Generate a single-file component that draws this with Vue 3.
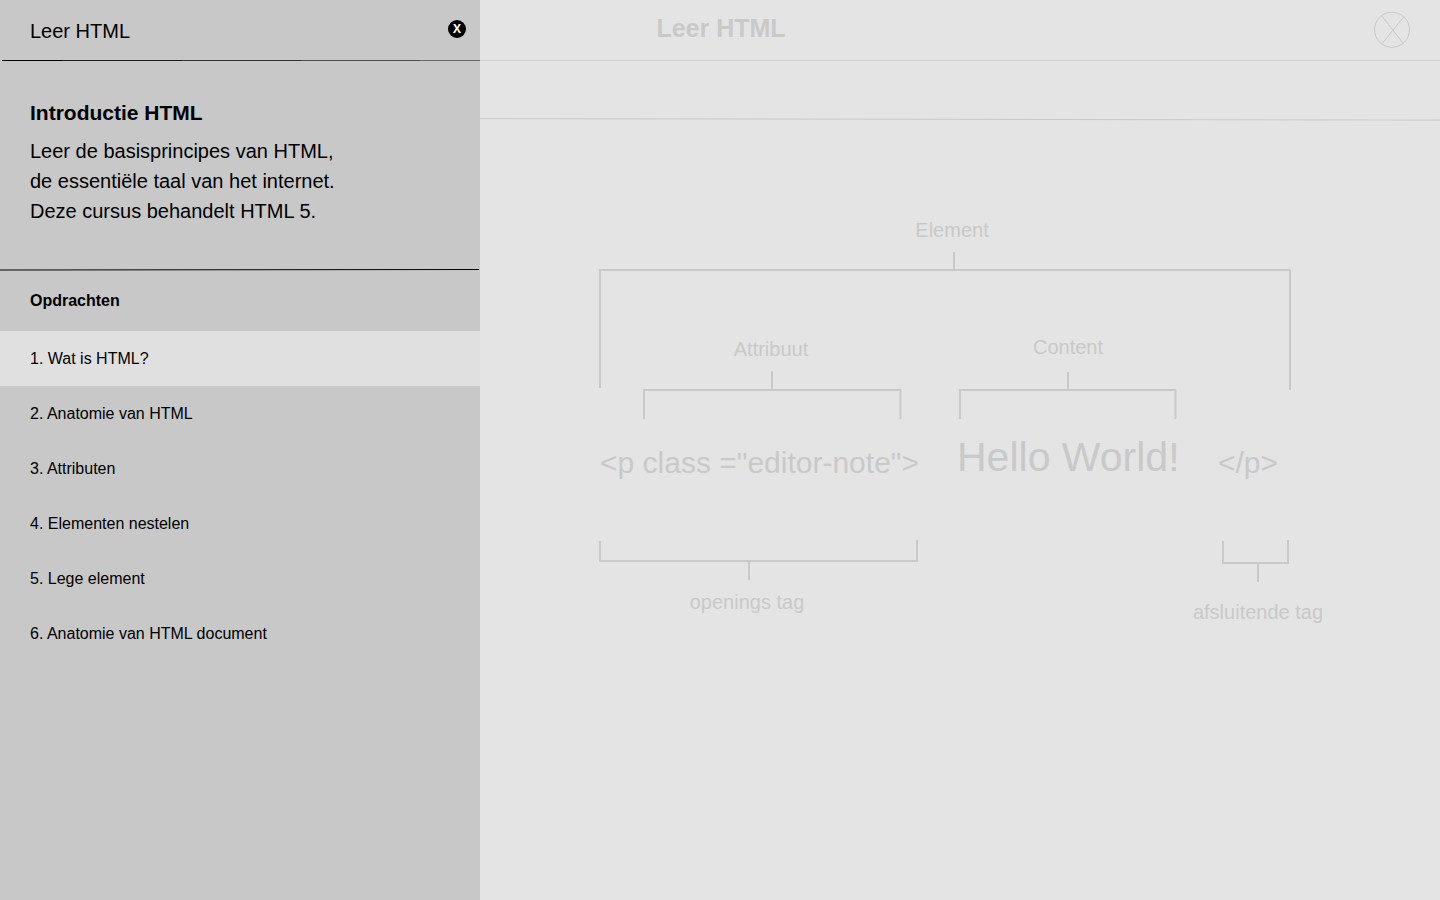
<script setup>
import { ref } from 'vue'

const lessons = [
  'Wat is HTML?',
  'Anatomie van HTML',
  'Attributen',
  'Elementen nestelen',
  'Lege element',
  'Anatomie van HTML document',
]
const active = ref(0)

const brackets = [
  'M600 388V270H1290V390M954 270V252',
  'M644 419V390H900.5V419M772 390V371',
  'M960 419V390H1175.5V419M1068 390V372',
  'M600 541V561H917V540M749 561V580',
  'M1223 541V563H1288V540M1258 563V582',
]

const labels = [
  { text: 'Element', x: 952, y: 237 },
  { text: 'Attribuut', x: 771, y: 356 },
  { text: 'Content', x: 1068, y: 354 },
  { text: 'openings tag', x: 747, y: 609 },
  { text: 'afsluitende tag', x: 1258, y: 619 },
]
</script>

<template>
  <div class="page">
    <header class="topbar">
      <h1 class="title">Leer HTML</h1>
      <button class="exit" type="button" aria-label="Cursus sluiten">
        <svg viewBox="0 0 36 36" width="36" height="36" fill="none" stroke="currentColor">
          <ellipse cx="18" cy="17.8" rx="17.5" ry="17.5" />
          <path d="M7.7 3.8L29.3 31.5M30.3 4.2L8.2 31.5" />
        </svg>
      </button>
    </header>

    <svg class="subline" viewBox="0 0 1440 60" preserveAspectRatio="none" aria-hidden="true">
      <line x1="480" y1="57.6" x2="1440" y2="59.1" stroke="#c9c9c9" />
    </svg>

    <main>
      <svg class="diagram" viewBox="0 121 1440 779" role="img" aria-label="Anatomie van een HTML-element">
        <path v-for="d in brackets" :key="d" class="bracket" :d="d" />
        <text v-for="l in labels" :key="l.text" class="label" :x="l.x" :y="l.y">{{ l.text }}</text>
        <text class="code" x="600" y="473">&lt;p class ="editor-note"&gt;</text>
        <text class="content" x="957" y="471">Hello World!</text>
        <text class="code" x="1218" y="473">&lt;/p&gt;</text>
      </svg>
    </main>

    <aside class="drawer">
      <div class="drawer-head">
        <span class="course">Leer HTML</span>
        <button class="close" type="button" aria-label="Menu sluiten">X</button>
      </div>
      <div class="head-line"></div>

      <section class="intro">
        <h2>Introductie HTML</h2>
        <p>
          Leer de basisprincipes van HTML,<br />
          de essentiële taal van het internet.<br />
          Deze cursus behandelt HTML 5.
        </p>
      </section>

      <svg class="divider" viewBox="0 0 480 3" preserveAspectRatio="none" aria-hidden="true">
        <line x1="0" y1="2" x2="479" y2="1.5" stroke="#000" />
      </svg>

      <h3>Opdrachten</h3>
      <nav>
        <a
          v-for="(lesson, i) in lessons"
          :key="lesson"
          href="#"
          class="lesson"
          :class="{ active: i === active }"
          @click.prevent="active = i"
        >{{ i + 1 }}. {{ lesson }}</a>
      </nav>
    </aside>
  </div>
</template>

<style>
body {
  background: #e4e4e4;
}
</style>

<style scoped>
.page {
  position: relative;
  min-height: 100vh;
  overflow: hidden;
  background: #e4e4e4;
  color: #c9c9c9;
  font-family: "Liberation Sans", Arial, sans-serif;
}
h1,
h2,
h3,
p {
  margin: 0;
}
button {
  padding: 0;
  border: 0;
  cursor: pointer;
}
.topbar {
  display: grid;
  grid-template-columns: 1fr auto 1fr;
  align-items: center;
  height: 60px;
  padding: 0 30px 0 32px;
  border-bottom: 1px solid #d0d0d0;
}
.title {
  grid-column: 2;
  padding-bottom: 4px;
  font-size: 25px;
  line-height: 28px;
}
.exit {
  justify-self: end;
  width: 36px;
  height: 36px;
  background: none;
  color: #c9c9c9;
}
.exit svg {
  display: block;
}
.subline {
  display: block;
  width: 100%;
  height: 60px;
}
.diagram {
  display: block;
  width: 100%;
}
.bracket {
  fill: none;
  stroke: #c9c9c9;
  stroke-width: 2;
}
.diagram text {
  fill: #c9c9c9;
}
.label {
  font-size: 20px;
  text-anchor: middle;
}
.code {
  font-size: 30px;
}
.content {
  font-size: 41px;
}
.drawer {
  position: absolute;
  top: 0;
  bottom: 0;
  left: 0;
  width: 480px;
  background: #c8c8c8;
  color: #000;
}
.drawer-head {
  display: flex;
  align-items: center;
  justify-content: space-between;
  box-sizing: border-box;
  height: 60px;
  padding: 0 14px 2px 30px;
}
.course {
  padding-top: 4px;
  font-size: 20px;
  line-height: 24px;
}
.close {
  width: 18px;
  height: 18px;
  border-radius: 50%;
  background: #000;
  color: #fff;
  font: bold 12px/18px "Open Sans", sans-serif;
  text-align: center;
}
.head-line {
  height: 1px;
  margin-left: 2px;
  background: linear-gradient(
    to right,
    #000 0 60px,
    #1a1a1a 60px 180px,
    #333 180px 299px,
    #4d4d4d 299px 418px,
    #696969 418px
  );
}
.intro {
  padding: 37px 30px 42px;
}
h2 {
  margin-bottom: 8px;
  font-size: 21px;
  line-height: 30px;
}
.intro p {
  font-size: 20px;
  line-height: 30px;
}
.divider {
  display: block;
  width: 100%;
  height: 3px;
}
h3 {
  padding: 0 30px;
  font-size: 16px;
  line-height: 60px;
}
.lesson {
  display: block;
  padding: 0 30px;
  color: #000;
  font-size: 16px;
  line-height: 55px;
  text-decoration: none;
}
.lesson.active {
  background: #e0e0e0;
}
</style>
